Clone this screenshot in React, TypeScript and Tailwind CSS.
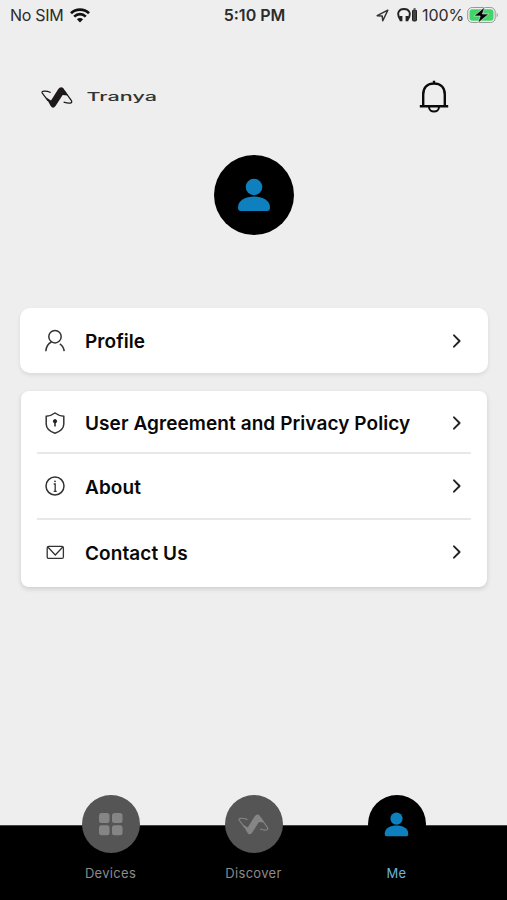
import type { ReactNode } from 'react';

function TranyaMark({ className }: { className?: string }) {
  return (
    <svg viewBox="8 11 99 68" className={className} fill="currentColor">
      <path d="M23 46 L39 56 L61 21 Q69 9 78 19 L90 40 L75 39 L53 73 Q45 83 38 73 Z" />
      <path
        d="M38 31 C24 25 7 25 12 33 L30 57 M80 25 L102 56 C107 66 94 66 78 61"
        fill="none"
        stroke="currentColor"
        strokeWidth="3.8"
      />
    </svg>
  );
}

function PersonSolid({ className }: { className?: string }) {
  return (
    <svg viewBox="0 0 34 34" className={className} fill="#0d80bd">
      <circle cx="17" cy="9" r="8.3" />
      <path d="M1 29.5 C1 22 9 18.5 17 18.5 S33 22 33 29.5 C33 32 32 33 30 33 H4 C2 33 1 32 1 29.5 Z" />
    </svg>
  );
}

function Chevron() {
  return (
    <svg viewBox="0 0 10 16" className="h-4 w-2.5" fill="none" stroke="#222" strokeWidth="1.9">
      <path d="M2 2.3 L7.6 8 L2 13.7" strokeLinecap="round" strokeLinejoin="round" />
    </svg>
  );
}

function StatusBar() {
  return (
    <div className="grid h-[30px] grid-cols-3 items-center pr-[8px] pl-[10px] text-[16px] text-[#2b2b2b]">
      <div className="flex items-center gap-[7px]">
        <span className="whitespace-nowrap tracking-[-0.3px]">No SIM</span>
        <svg viewBox="0 0 20 15" className="h-[15px] w-5" fill="none" stroke="#111" strokeWidth="2.7">
          <path d="M1 5.2 C6 .3 14 .3 19 5.2 M4.2 8.6 C7.5 5.4 12.5 5.4 15.8 8.6" />
          <path d="M6.9 11.3 Q10 8.5 13.1 11.3 L10 14.5 Z" fill="#111" stroke="none" />
        </svg>
      </div>
      <div className="text-center font-semibold whitespace-nowrap">5:10 PM</div>
      <div className="flex items-center justify-end">
        <svg viewBox="0 0 13 13" className="mr-[8px] h-[13px] w-[13px] shrink-0" fill="none" stroke="#333" strokeWidth="1.5">
          <path d="M1.2 6.7 L11.8 1.2 L6.8 11.8 L6.2 7 Z" strokeLinejoin="round" />
        </svg>
        <svg viewBox="0 0 21 14" className="mr-[4px] h-[14px] w-[21px] shrink-0" fill="none" stroke="#222">
          <path d="M3.2 11.5 C-1 5 2 1 7 1 S15 5 10.8 11.5" strokeWidth="1.9" />
          <path d="M4 8 V13.3 M10 8 V13.3" strokeWidth="2.8" />
          <rect x="15.5" y="2" width="4" height="11" rx="1" fill="#444" strokeWidth="1" />
          <path d="M16.6 .8 H18.6" />
        </svg>
        <span className="tracking-[-0.1px]">100%</span>
        <svg viewBox="0 0 32 18" className="ml-[3px] h-[18px] w-8 shrink-0">
          <rect x=".7" y="1.5" width="27.5" height="15" rx="4.5" fill="#eee" stroke="#999" />
          <rect x="2.5" y="3.3" width="24" height="11.4" rx="3" fill="#42d46a" />
          <path d="M29.7 6.5 Q32 9 29.7 11.5 Z" fill="#999" />
          <path d="M17.8 1 L7 10 H13.2 L11 17 L21.8 8 H15.4 Z" fill="#050505" stroke="#eee" strokeWidth=".6" />
        </svg>
      </div>
    </div>
  );
}

function Row({ icon, label, className }: { icon: ReactNode; label: string; className: string }) {
  return (
    <div className={`flex items-center ${className}`}>
      <div className="flex w-6 justify-center">{icon}</div>
      <span className="ml-[18px] flex-1 pt-[3px] text-[19px] leading-6 font-semibold tracking-[0.08px] whitespace-nowrap text-[#080808]">
        {label}
      </span>
      <Chevron />
    </div>
  );
}

const iconProps = {
  viewBox: '0 0 24 24',
  className: 'h-6 w-6',
  fill: 'none',
  stroke: '#333',
  strokeWidth: 1.5,
};

function Tab({ icon, label, circle, text }: { icon: ReactNode; label: string; circle: string; text: string }) {
  return (
    <div className="-mt-[31px] flex w-[143px] flex-col items-center">
      <div className={`flex h-[58px] w-[58px] items-center justify-center rounded-full ${circle}`}>{icon}</div>
      <span className={`mt-[10px] text-[13px] leading-5 tracking-[0.3px] ${text}`}>{label}</span>
    </div>
  );
}

export default function App() {
  return (
    <div className="flex h-[900px] w-[507px] flex-col overflow-hidden bg-[#eeeeee] font-['Inter','Liberation_Sans',sans-serif]">
      <StatusBar />

      <header className="mt-[47px] flex h-10 items-center justify-between pr-[58px] pl-[41px]">
        <div className="flex items-center gap-[13px] text-[#1d191a]">
          <TranyaMark className="h-[22px] w-8" />
          <svg viewBox="0 0 72 20" className="h-5 w-[72px]">
            <text
              x="0.5"
              y="14"
              fontFamily="Inter, sans-serif"
              fontSize="12"
              fontWeight="500"
              fill="#333"
              textLength="70.5"
              lengthAdjust="spacingAndGlyphs"
            >
              Tranya
            </text>
          </svg>
        </div>
        <svg viewBox="0 0 30 34" className="h-[34px] w-[30px]" fill="none" stroke="#0b0b0b" strokeWidth="2.4">
          <path d="M4.2 26 V14.5 C4.2 7 9 3.5 15 3.5 S25.8 7 25.8 14.5 V26 M.8 26.2 H29.2 M15 .7 V4" />
          <path d="M10 27 C10 33 20 33 20 27" strokeWidth="2" />
        </svg>
      </header>

      <div className="mx-auto mt-[38px] flex h-20 w-20 items-center justify-center rounded-full bg-black">
        <PersonSolid className="h-[34px] w-[34px]" />
      </div>

      <main className="mt-[73px] flex flex-col gap-[18px] pr-[19px] pl-5">
        <section className="rounded-[10px] bg-white pr-[26px] pl-[23px] shadow-[0_2px_4px_rgba(0,0,0,0.09)]">
          <Row
            className="h-[65px]"
            label="Profile"
            icon={
              <svg {...iconProps}>
                <circle cx="12" cy="7.7" r="6.2" />
                <path d="M8.5 13 C5 14.6 3.2 18 2.8 22.2 M16.8 14.8 C19.5 16.5 20.8 19 21.2 22.2" />
              </svg>
            }
          />
        </section>

        <section className="mx-px rounded-[8px] bg-white px-4 shadow-[0_2px_5px_rgba(0,0,0,0.14)]">
          <div className="divide-y-2 divide-[#e8e8e8]">
            <Row
              className="h-[63px] pt-0.5 pr-[9px] pl-1.5"
              label="User Agreement and Privacy Policy"
              icon={
                <svg {...iconProps}>
                  <path d="M12 2 C9 4.3 6 5 3.2 5.3 V13 C3.2 18 7 20.5 12 22.2 C17 20.5 20.8 18 20.8 13 V5.3 C18 5 15 4.3 12 2 Z" />
                  <circle cx="12" cy="10.2" r="1.7" fill="#222" stroke="#222" strokeWidth=".8" />
                  <path d="M12 11 V15.5" stroke="#222" />
                </svg>
              }
            />
            <Row
              className="h-[66px] pr-[9px] pl-1.5"
              label="About"
              icon={
                <svg {...iconProps}>
                  <circle cx="12" cy="12" r="9" />
                  <path d="M10.7 10 H12.2 V17.3 M10.7 17.3 H13.7" strokeWidth="1.3" />
                  <circle cx="12" cy="7.3" r=".9" fill="#333" stroke="none" />
                </svg>
              }
            />
            <Row
              className="h-[67px] pr-[9px] pb-[3px] pl-1.5"
              label="Contact Us"
              icon={
                <svg {...iconProps}>
                  <rect x="4.2" y="6.4" width="16.2" height="12" rx="1.5" strokeWidth="1.3" />
                  <path d="M4.8 7 L12.3 15 L19.8 7" strokeWidth="1.3" />
                </svg>
              }
            />
          </div>
        </section>
      </main>

      <nav className="mt-auto flex h-[75px] justify-center border-t border-[#444] bg-black">
        <Tab
          label="Devices"
          circle="bg-[#555555]"
          text="text-[#8b8b8b]"
          icon={
            <svg viewBox="0 0 24 24" className="h-6 w-6" fill="#858585">
              <rect x="0" y="1" width="10.5" height="10" rx="2.5" />
              <rect x="13" y="1" width="10.5" height="10" rx="2.5" />
              <rect x="0" y="13.3" width="10.5" height="10" rx="2.5" />
              <rect x="13" y="13.3" width="10.5" height="10" rx="2.5" />
            </svg>
          }
        />
        <Tab
          label="Discover"
          circle="bg-[#555555]"
          text="text-[#8b8b8b]"
          icon={<TranyaMark className="h-[22px] w-[31px] text-[#858585]" />}
        />
        <Tab
          label="Me"
          circle="bg-black"
          text="text-[#6bb4de]"
          icon={<PersonSolid className="h-[25px] w-[25px]" />}
        />
      </nav>
    </div>
  );
}
